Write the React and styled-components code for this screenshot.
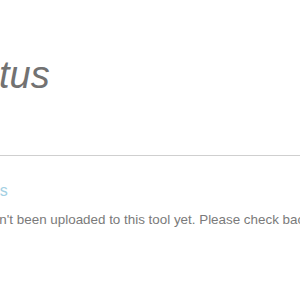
import React from 'react';
import styled, { createGlobalStyle } from 'styled-components';

const GlobalStyle = createGlobalStyle`
  html, body {
    margin: 0;
    padding: 0;
    background: #fff;
  }
  body {
    font-family: "Liberation Sans", Arial, sans-serif;
  }
`;

const Page = styled.div`
  width: 300px;
  height: 300px;
  overflow: hidden;
  background: #fff;
`;

const Header = styled.header`
  padding-top: 51px;
  height: 156px;
  box-sizing: border-box;
  border-bottom: 1px solid #cfcfcf;
`;

const Title = styled.h1`
  margin: 0 0 0 ${({ $shift }) => -$shift}px;
  font-size: 38px;
  line-height: 48px;
  font-weight: 400;
  font-style: italic;
  color: #727272;
  white-space: nowrap;
`;

const Section = styled.section`
  padding-top: 25px;
`;

const SubTitle = styled.h2`
  margin: 0 0 ${({ $gap }) => $gap}px ${({ $shift }) => -$shift}px;
  font-size: 16px;
  line-height: 19px;
  font-weight: 400;
  color: #a3d0e3;
  white-space: nowrap;
`;

const Message = styled.p`
  margin: 0 0 0 ${({ $shift }) => -$shift}px;
  font-size: 13.4px;
  line-height: 20px;
  color: #7a7a7a;
  white-space: nowrap;
`;

export default function App() {
  return (
    <>
      <GlobalStyle />
      <Page>
        <Header>
          <Title $shift={58}>Status</Title>
        </Header>
        <Section>
          <SubTitle $shift={26} $gap={10}>Files</SubTitle>
          <Message $shift={84}>
            The files haven't been uploaded to this tool yet. Please check back later.
          </Message>
        </Section>
      </Page>
    </>
  );
}
